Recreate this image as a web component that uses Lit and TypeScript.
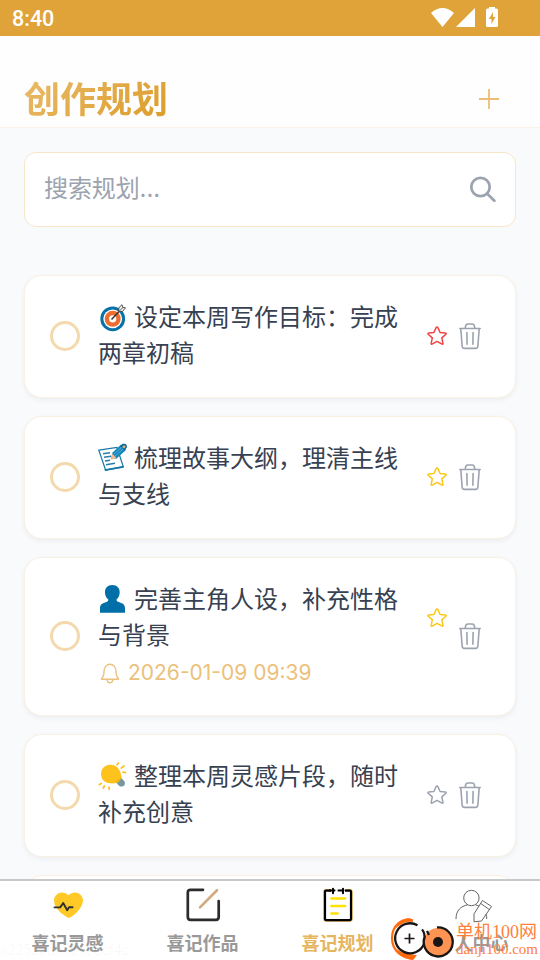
import { LitElement, html, svg, css, nothing } from "lit";
import { customElement, property } from "lit/decorators.js";

type Emoji = "target" | "memo" | "person" | "bulb";
interface Plan {
  emoji: Emoji;
  lines: [string, string];
  level: "high" | "mid" | "low";
  remind?: string;
}

const PLANS: Plan[] = [
  { emoji: "target", lines: ["设定本周写作目标：完成", "两章初稿"], level: "high" },
  { emoji: "memo", lines: ["梳理故事大纲，理清主线", "与支线"], level: "mid" },
  { emoji: "person", lines: ["完善主角人设，补充性格", "与背景"], level: "mid", remind: "2026-01-09 09:39" },
  { emoji: "bulb", lines: ["整理本周灵感片段，随时", "补充创意"], level: "low" },
];

const EMOJI = {
  target: svg`
    <circle cx="14.700" cy="17.800" r="12.400" fill="#0872a8"/>
    <circle cx="14.700" cy="17.800" r="9.400" fill="#fff"/>
    <circle cx="14.700" cy="17.800" r="8" fill="#ed6c30"/>
    <circle cx="14.700" cy="17.800" r="3.600" fill="#fff"/>
    <path d="M13.500 18.500 22.500 9" stroke="#333" stroke-width="1.500"/>
    <path d="M20.800 10.500V6.700l3.200-3 .8 2.600 2.700.5-3 3.700z" fill="#eee" stroke="#444" stroke-width=".9"/>
    <path d="m21.500 10 3.600-3.800" stroke="#444" stroke-width=".8"/>`,
  memo: svg`
    <path d="M.8 8.200 19 5.500l6.300 19.200L7.600 28z" fill="#fff" stroke="#1679a8" stroke-width="1.200"/>
    <path d="m6.700 28.100 18.700-3.300" stroke="#1679a8" stroke-width="1.800"/>
    <path d="m5 11.800 7-1m-6 4.500 7-1m-6 4.700 5-.8m-4 4.500 9-1.500" stroke="#287eaa" stroke-width="1.400"/>
    <path d="m12.800 17 1.800-6.500L22.500 3.100l5.500 5-9.600 8.700z" fill="#1688bd"/>
    <path d="m16 12 8-7m-7 9 8-7" stroke="#58b5d7" stroke-width=".8"/>
    <path d="m12.600 17.800 1.800-6.100 4.300 4.500z" fill="#f5b892"/>
    <path d="m22 3.800 2.700-2q4.800-.8 4.100 3.700l-2.100 3z" fill="#0c668f"/>
    <circle cx="26" cy="4.800" r="1.500" fill="#d7a98b"/>`,
  person: svg`
    <path d="M14.300 2c4.800 0 7.600 3.200 7.400 7.600-.1 3.200-1.400 5.600-3.200 7 .1 2 .8 2.100 3.500 2.800 3.700 1 5 2.700 5 6.300v4.100H2v-4.100c0-3.600 1.400-5.200 5-6.200 2.700-.8 3.200-1 3.300-2.900-1.900-1.400-3.200-3.800-3.300-7C6.800 5.200 9.500 2 14.300 2z" fill="#006fa8"/>`,
  bulb: svg`
    <path d="M3.600 17.500C1.500 10.500 5.500 5.100 11.500 4.700c7.200-.6 11.200 4.800 12 12.300l-4 5.800c-6.800 1.500-13.800.7-15.900-5.300z" fill="#fdc21c"/>
    <path d="m23 16.800.9 2-4.200 5-2.600-1.500z" fill="#f6b414"/>
    <path d="m23.800 18.300 3 3.600c.7 3.400-1.300 5.200-4.700 4.500l-3.200-2.700z" fill="#7599a2"/>
    <path d="m20.300 3-1.100 1.800M26 5.800l-2.600 2.200M27.500 12.600l-2.500-.4M1.300 24.500l2-1M5.300 28l1-2M11.200 29.300l-.3-2.300" stroke="#fdc21c" stroke-width="1.700" stroke-linecap="round"/>`,
};

@customElement("plan-card")
class PlanCard extends LitElement {
  @property({ attribute: false }) plan!: Plan;

  static styles = css`
    :host {
      display: flex;
      align-items: center;
      box-sizing: border-box;
      padding: 22px 33px 24px 25px;
      background: #fff;
      border: 1px solid #fbf1e2;
      border-radius: 18px;
      box-shadow: 0 2px 5px rgba(30, 41, 59, 0.06);
    }
    .check { box-sizing: border-box; width: 30px; height: 30px; border: 3px solid #f3d9ac; border-radius: 50%; flex: none; }
    .body { flex: 1; margin-left: 18px; padding-bottom: 4px; color: #374151; font: 24px/36px "Noto Sans CJK SC", sans-serif; white-space: nowrap; }
    .dated { padding-bottom: 0; }
    .emoji { width: 30px; height: 31px; margin-right: 6px; vertical-align: -6px; overflow: visible; }
    .line { height: 36px; }
    .dated .line { position: relative; top: -1px; }
    .remind { display: flex; align-items: center; gap: 6px; height: 36px; padding-top: 2px; margin-left: 2px; color: #ebc17b; font: 21px/36px Inter, sans-serif; }
    .bell { width: 22px; height: 24px; margin-top: 1px; }
    .actions { display: flex; align-items: center; gap: 11px; }
    .star { width: 22px; height: 22px; margin-right: -1px; }
    .lift { margin-top: -35px; }
    .trash { width: 24px; height: 28px; }
    .high { color: #ef4444; }
    .mid { color: #fcc717; }
    .low { color: #9ca3af; }
  `;

  render() {
    const p = this.plan;
    return html`
      <span class="check"></span>
      <div class="body ${p.remind ? "dated" : ""}">
        <div class="line"><svg class="emoji" viewBox="0 0 30 31" fill="none">${EMOJI[p.emoji]}</svg>${p.lines[0]}</div>
        <div class="line">${p.lines[1]}</div>
        ${p.remind
          ? html`<div class="remind">
              <svg class="bell" viewBox="0 0 22 24" fill="none" stroke="currentColor" stroke-width="1.400" stroke-linejoin="round">
                <path d="M4 10.500C4 6 6.800 3.200 10 3.200s6 2.800 6 7.300c0 4.200.8 5.700 2.500 7.100v.6H1.500v-.6C3.200 16.200 4 14.700 4 10.500zM7.200 18.500c0 4.300 5.600 4.300 5.600 0" />
              </svg>${p.remind}</div>`
          : nothing}
      </div>
      <div class="actions">
        <svg class="star ${p.level} ${p.remind ? "lift" : ""}" viewBox="0 0 22 22" fill="none" stroke="currentColor" stroke-width="1.500" stroke-linejoin="round">
          <path d="M11 1.900q.6 0 .9.700l2.200 4.900 5.500.6q1.100.3.300 1.100l-4.100 3.700 1.200 5.500q.1 1.100-.9.700L11 16.300l-4.900 2.800q-1.100.4-.9-.7L6.300 12.900 2.200 9.200q-.8-.8.300-1.100l5.400-.6 2.200-4.900q.3-.7.900-.7z" />
        </svg>
        <svg class="trash" viewBox="0 0 24 28" fill="none" stroke="#9ca3af" stroke-width="1.600" stroke-linecap="round" stroke-linejoin="round">
          <path d="M1.800 6.500h20.400M7.300 6.200C7.300 3.200 8.300 2 10 2h4c1.700 0 2.700 1.200 2.700 4.200M2.800 6.700l1.300 17c.1 2 .8 2.700 2.200 2.700h11.400c1.400 0 2.100-.7 2.200-2.700l1.300-17M8.900 10.500l.2 11.700M15.100 10.500l-.2 11.700" />
        </svg>
      </div>`;
  }
}

@customElement("app-root")
class AppRoot extends LitElement {
  static styles = css`
    :host {
      display: flex;
      flex-direction: column;
      position: relative;
      width: 540px;
      height: 960px;
      overflow: hidden;
      background: #f8fafc;
      font-family: "Noto Sans CJK SC", sans-serif;
    }
    .status { flex: none; display: flex; align-items: center; height: 36px; padding: 0 40px 0 12px; box-sizing: border-box; background: #dfa339; color: #fff; font: 500 21.5px/36px Roboto, sans-serif; }
    .clock { flex: 1; padding-top: 2px; }
    .signals { width: 70px; height: 24px; }
    .header { flex: none; display: flex; justify-content: space-between; align-items: center; box-sizing: border-box; height: 92px; padding: 35px 40px 0 24px; background: #fefefe; border-bottom: 1px solid #faf1e9; }
    h1 { margin: -4px 0 0; font-size: 36px; line-height: 54px; font-weight: 700; color: transparent; background: linear-gradient(135deg, #e9bb6b, #dc9c27); -webkit-background-clip: text; background-clip: text; }
    .plus { width: 22px; height: 22px; }
    .search { flex: none; display: flex; align-items: center; justify-content: space-between; box-sizing: border-box; height: 75px; margin: 24px 24px 0; padding: 0 18px 2px 19px; border: 1px solid #f8e6c8; border-radius: 12px; background: #fff; color: #9ca3af; font-size: 24px; line-height: 36px; }
    .hint { letter-spacing: -0.1px; margin-top: -2px; }
    .dots { font-family: Inter, sans-serif; }
    .glass { width: 28px; height: 28px; }
    .list { flex: 1; min-height: 0; overflow: hidden; display: flex; flex-direction: column; gap: 18px; padding: 48px 24px 0; }
    plan-card { flex: none; height: 123px; }
    plan-card.tall { height: 159px; }
    .next { flex: none; height: 60px; border: 1px solid #fbeee0; border-radius: 18px; background: #fff; }
    .tabs { flex: none; display: grid; grid-template-columns: repeat(4, 1fr); box-sizing: border-box; height: 81px; border-top: 2px solid #c8c8c8; background: #fff; }
    .tab { display: flex; flex-direction: column; align-items: center; padding-top: 6px; color: #999; font-size: 18px; line-height: 26px; font-weight: 700; }
    .tab svg { width: 40px; height: 38px; margin-bottom: 4px; }
    .active { color: #e6b55e; }
    .trace { position: absolute; left: 0; bottom: 0; color: rgba(0, 0, 0, 0.035); font: 14px/20px Roboto, sans-serif; }
    .brand { position: absolute; left: 388px; top: 912px; width: 152px; height: 48px; }
    .cn { font: 18px "Noto Sans CJK SC", sans-serif; }
    .serif { font-family: "Liberation Serif", "Noto Sans CJK SC", serif; }
  `;

  render() {
    return html`
      <div class="status">
        <span class="clock">8:40</span>
        <svg class="signals" viewBox="430 6 70 24" fill="#fff">
          <path d="M431 13q11.500-10 23 0L442.500 27zM475 8v19h-19z" />
          <path d="M489 8.500V7h6v1.500h1.500q1.500 0 1.500 1.500v15.500q0 1.500-1.500 1.500h-9q-1.500 0-1.500-1.500V10q0-1.500 1.500-1.500z" />
          <path d="m493 12-4 7h2.500v5l4-7H493z" fill="#dfa339" />
        </svg>
      </div>
      <div class="header">
        <h1>创作规划</h1>
        <svg class="plus" viewBox="0 0 22 22"><path d="M11 1v20M1 11h20" stroke="#ebc074" stroke-width="1.800" /></svg>
      </div>
      <div class="search">
        <span class="hint">搜索规划<span class="dots">...</span></span>
        <svg class="glass" viewBox="0 0 28 28" fill="none" stroke="#9ca3af" stroke-width="2.700" stroke-linecap="round">
          <circle cx="11.500" cy="12" r="9.200" /><path d="m18.200 18.700 7.200 7" />
        </svg>
      </div>
      <div class="list">
        ${PLANS.map((p) => html`<plan-card class=${p.remind ? "tall" : ""} .plan=${p}></plan-card>`)}
        <div class="next"></div>
      </div>
      <div class="tabs">
        <div class="tab">
          <svg viewBox="0 0 40 38" fill="none">
            <path d="M20.500 31C14 27.500 6 21 6 13.500 6 6 15 2.500 20.500 8.300 26 2.500 35 6 35 13.500 35 21 25 30 20.500 31z" fill="#ffca28" />
            <path d="M6.500 20.400h5.700l3-4.400 4 7.200 1.800-3h3.600" stroke="#303030" stroke-width="1.900" stroke-linecap="round" stroke-linejoin="round" />
          </svg>喜记灵感
        </div>
        <div class="tab">
          <svg viewBox="0 0 40 38" fill="none" stroke-width="2.700" stroke-linecap="round">
            <path d="M20 2.800H7.500Q4.800 2.800 4.800 5.500V30q0 2.800 2.700 2.800H33q2.700 0 2.700-2.800V14" stroke="#2c2c2c" />
            <path d="M17 20.400 34 3.200" stroke="#d4aa80" />
          </svg>喜记作品
        </div>
        <div class="tab active">
          <svg viewBox="0 0 40 38" fill="none">
            <rect x="7" y="3.600" width="26" height="29.500" rx="1" stroke="#e9af48" stroke-width="3.400" />
            <rect x="7" y="3.600" width="26" height="29.500" rx="1" fill="#fff" stroke="#000" stroke-width="2.200" />
            <path d="M13 3.600h14" stroke="#fff" stroke-width="3" />
            <path d="M11.500 3.600h5m4 0h5M15 1.800v4.500M25 1.800v4.500" stroke="#000" stroke-width="2" stroke-linecap="round" />
            <path d="M13.500 11.500H27M13.500 19H27M13.500 26.500h6" stroke="#ffe100" stroke-width="2.700" stroke-linecap="round" />
          </svg>喜记规划
        </div>
        <div class="tab">
          <svg viewBox="0 0 40 38" fill="none" stroke="#666" stroke-width="1">
            <circle cx="18.400" cy="11" r="7.700" />
            <path d="M3 32C3 23 8 19.300 14.500 17.900M22.300 17.700l3.800 1.500M33.700 32q.2-3-.8-5M29.500 13.500l9 6-10 14.500-7.500.8v-8zM27.800 16.500l8.500 6" />
          </svg>个人中心
        </div>
      </div>
      <span class="trace">a22528d56b0cdcf4c</span>
      <svg class="brand" viewBox="388 912 152 48" fill="none">
        <path d="M413 920.500C402 917 392 926 392 938c0 12 10 22 23 19" stroke="#ff6a0c" stroke-width="2.200" />
        <path d="M395 929c4-7 11-13 17-10l1 3c-8-1-13 3-18 7zM397 949c6 5 13 5 20 6l-4 5c-7-.5-14-4-16-11z" fill="#ff6a0c" />
        <circle cx="410" cy="938.500" r="14.500" fill="#fff" />
        <path d="M417.500 925.200A15 15 0 1 0 424 944" stroke="#1c1516" stroke-width="2.300" />
        <circle cx="438" cy="942" r="14" fill="#ff9452" />
        <path d="M422 929.500q3 3 2.500 9.500M427 931l2 4M437 927.500A14.500 14.500 0 1 1 425 936" stroke="#1c1516" stroke-width="2.300" />
        <path d="M409.500 933.500v10m-5-5h10" stroke="#1c1516" stroke-width="1.700" />
        <circle cx="438" cy="942" r="5" fill="#1c1516" />
        <text class="cn" x="456" y="937.500" fill="#ff8040">单机<tspan class="serif">100</tspan>网</text>
        <text class="serif" x="456" y="953.500" fill="#ff8040" font-size="15.500" textLength="82" lengthAdjust="spacingAndGlyphs">danji100.com</text>
      </svg>`;
  }
}
